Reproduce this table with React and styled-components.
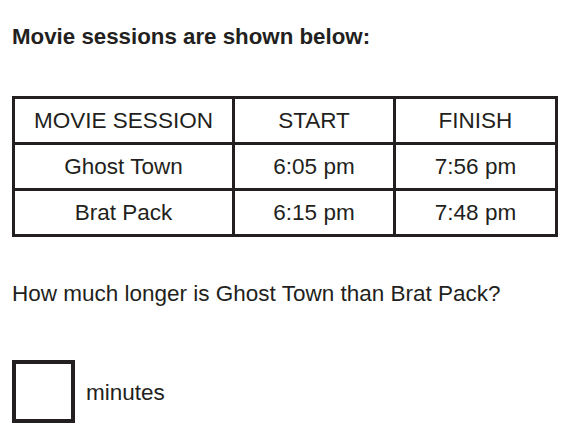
import React from 'react';
import styled, { createGlobalStyle } from 'styled-components';

const sessions = [
  { name: 'Ghost Town', start: '6:05 pm', finish: '7:56 pm' },
  { name: 'Brat Pack', start: '6:15 pm', finish: '7:48 pm' },
];

const App = () => {
  return (
    <Page>
      <GlobalStyle />
      <Heading>Movie sessions are shown below:</Heading>
      <SessionTable>
        <Cell>MOVIE SESSION</Cell>
        <Cell>START</Cell>
        <Cell>FINISH</Cell>
        {sessions.map(s => (
          <React.Fragment key={s.name}>
            <Cell>{s.name}</Cell>
            <Cell>{s.start}</Cell>
            <Cell>{s.finish}</Cell>
          </React.Fragment>
        ))}
      </SessionTable>
      <Question>How much longer is Ghost Town than Brat Pack?</Question>
      <AnswerRow>
        <AnswerBox />
        <Unit>minutes</Unit>
      </AnswerRow>
    </Page>
  );
};

export default App;

const GlobalStyle = createGlobalStyle`
  body {
    margin: 0;
    background: #ffffff;
    font-family: "Liberation Sans", Arial, sans-serif;
    color: #231f20;
  }
`;

const Page = styled.div`
  display: flex;
  flex-direction: column;
  align-items: flex-start;
  width: 579px;
  height: 447px;
  padding: 24px 12px 0;
  box-sizing: border-box;
  font-size: 22.5px;
  line-height: 25px;
`;

const Heading = styled.h1`
  margin: 0;
  font-size: 22.3px;
  line-height: 25px;
  font-weight: 700;
`;

const SessionTable = styled.div`
  display: grid;
  grid-template-columns: 217px 158px 159px;
  grid-auto-rows: 43px;
  gap: 3px;
  padding: 3px;
  margin-top: 47px;
  background: #231f20;
`;

const Cell = styled.div`
  display: flex;
  align-items: center;
  justify-content: center;
  padding-bottom: 1px;
  background: #ffffff;
`;

const Question = styled.p`
  margin: 44px 0 0;
`;

const AnswerRow = styled.div`
  display: flex;
  align-items: center;
  gap: 11px;
  margin-top: 54px;
`;

const AnswerBox = styled.div`
  width: 63px;
  height: 63px;
  box-sizing: border-box;
  border: 4px solid #231f20;
  background: #ffffff;
`;

const Unit = styled.span`
  padding-top: 2px;
`;
